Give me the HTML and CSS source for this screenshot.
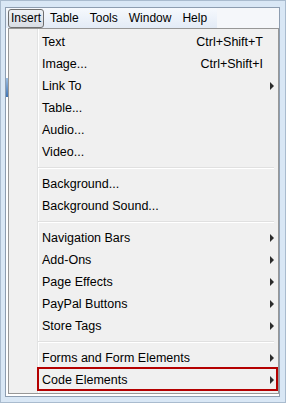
FILE: index.html
```html
<!DOCTYPE html>
<html>
<head>
<meta charset="utf-8">
<link rel="stylesheet" href="styles.css">
</head>
<body>
<div class="window">
  <div class="client">
    <div class="menubar">
      <div class="menus">
        <span class="mitem active">Insert</span>
        <span class="mitem">Table</span>
        <span class="mitem">Tools</span>
        <span class="mitem">Window</span>
        <span class="mitem">Help</span>
      </div>
    </div>
    <div class="content">
      <div class="bluebar"></div>
    </div>
  </div>
</div>

<div class="popup">
  <div class="item"><span class="label">Text</span><span class="key">Ctrl+Shift+T</span></div>
  <div class="item"><span class="label">Image...</span><span class="key">Ctrl+Shift+I</span></div>
  <div class="item sub"><span class="label">Link To</span></div>
  <div class="item"><span class="label">Table...</span></div>
  <div class="item"><span class="label">Audio...</span></div>
  <div class="item"><span class="label">Video...</span></div>
  <div class="sep"></div>
  <div class="item"><span class="label">Background...</span></div>
  <div class="item"><span class="label">Background Sound...</span></div>
  <div class="sep"></div>
  <div class="item sub"><span class="label">Navigation Bars</span></div>
  <div class="item sub"><span class="label">Add-Ons</span></div>
  <div class="item sub"><span class="label">Page Effects</span></div>
  <div class="item sub"><span class="label">PayPal Buttons</span></div>
  <div class="item sub"><span class="label">Store Tags</span></div>
  <div class="sep"></div>
  <div class="item sub"><span class="label">Forms and Form Elements</span></div>
  <div class="item sub marked"><span class="label">Code Elements</span></div>
</div>
</body>
</html>
```

FILE: styles.css
```css
html, body {
  margin: 0;
  padding: 0;
  background: #ffffff;
}

body {
  font-family: "Liberation Sans", Arial, sans-serif;
  font-size: 12px;
  color: #000;
  width: 298px;
  height: 410px;
  overflow: hidden;
  position: relative;
}

.window {
  width: 286px;
  height: 403px;
  box-sizing: border-box;
  border: 1px solid #a9bbce;
  background: #d9e7f5;
  padding: 6px 5px 5px 4px;
}

.client {
  height: 100%;
  box-sizing: border-box;
  border: 1px solid #8d9db0;
  background: #ffffff;
  display: flex;
  flex-direction: column;
}

.menubar {
  height: 20px;
  flex: none;
  background: #f5f7fa;
  display: flex;
}

.menus {
  display: flex;
  align-items: center;
  padding-left: 2px;
  padding-right: 4px;
  background: linear-gradient(#f6f9fd, #e3ebf6);
}

.mitem {
  padding: 0 4px;
  height: 17px;
  line-height: 17px;
  margin-right: 1px;
  border: 1px solid transparent;
  border-radius: 3px;
}

.mitem.active {
  border-color: #6f6f6f;
  background: linear-gradient(#eef1f5, #d8dde4);
  padding: 0 2px;
}

.content {
  flex: 1;
}

.bluebar {
  margin-top: 50px;
  width: 3px;
  height: 19px;
  background: linear-gradient(#9cbde0, #3f74b4);
}

.popup {
  position: absolute;
  left: 8px;
  top: 28px;
  width: 271px;
  box-sizing: border-box;
  border: 1px solid #979797;
  background-color: #f0f0f0;
  background-image: linear-gradient(to right, transparent 28px, #e2e3e3 28px, #e2e3e3 29px, #ffffff 29px, #ffffff 30px, transparent 30px);
  padding: 2px 1px;
  font-size: 12.5px;
}

.item {
  position: relative;
  height: 22px;
  display: flex;
  align-items: center;
  padding-left: 32px;
  padding-right: 14px;
}

.label {
  flex: 1;
  white-space: nowrap;
}

.key {
  white-space: nowrap;
}

.sub::before {
  content: "";
  position: absolute;
  right: 3px;
  top: 7px;
  width: 0;
  height: 0;
  border-top: 4px solid transparent;
  border-bottom: 4px solid transparent;
  border-left: 4px solid #2b2b2b;
}

.marked::after {
  content: "";
  position: absolute;
  left: 27px;
  right: -1px;
  top: -2px;
  bottom: 0;
  border: 2px solid #b40000;
}

.sep {
  height: 10px;
  margin-left: 28px;
  margin-right: 3px;
  background: linear-gradient(transparent 4px, #e0e0e0 4px, #e0e0e0 5px, #ffffff 5px, #ffffff 6px, transparent 6px);
}
```
